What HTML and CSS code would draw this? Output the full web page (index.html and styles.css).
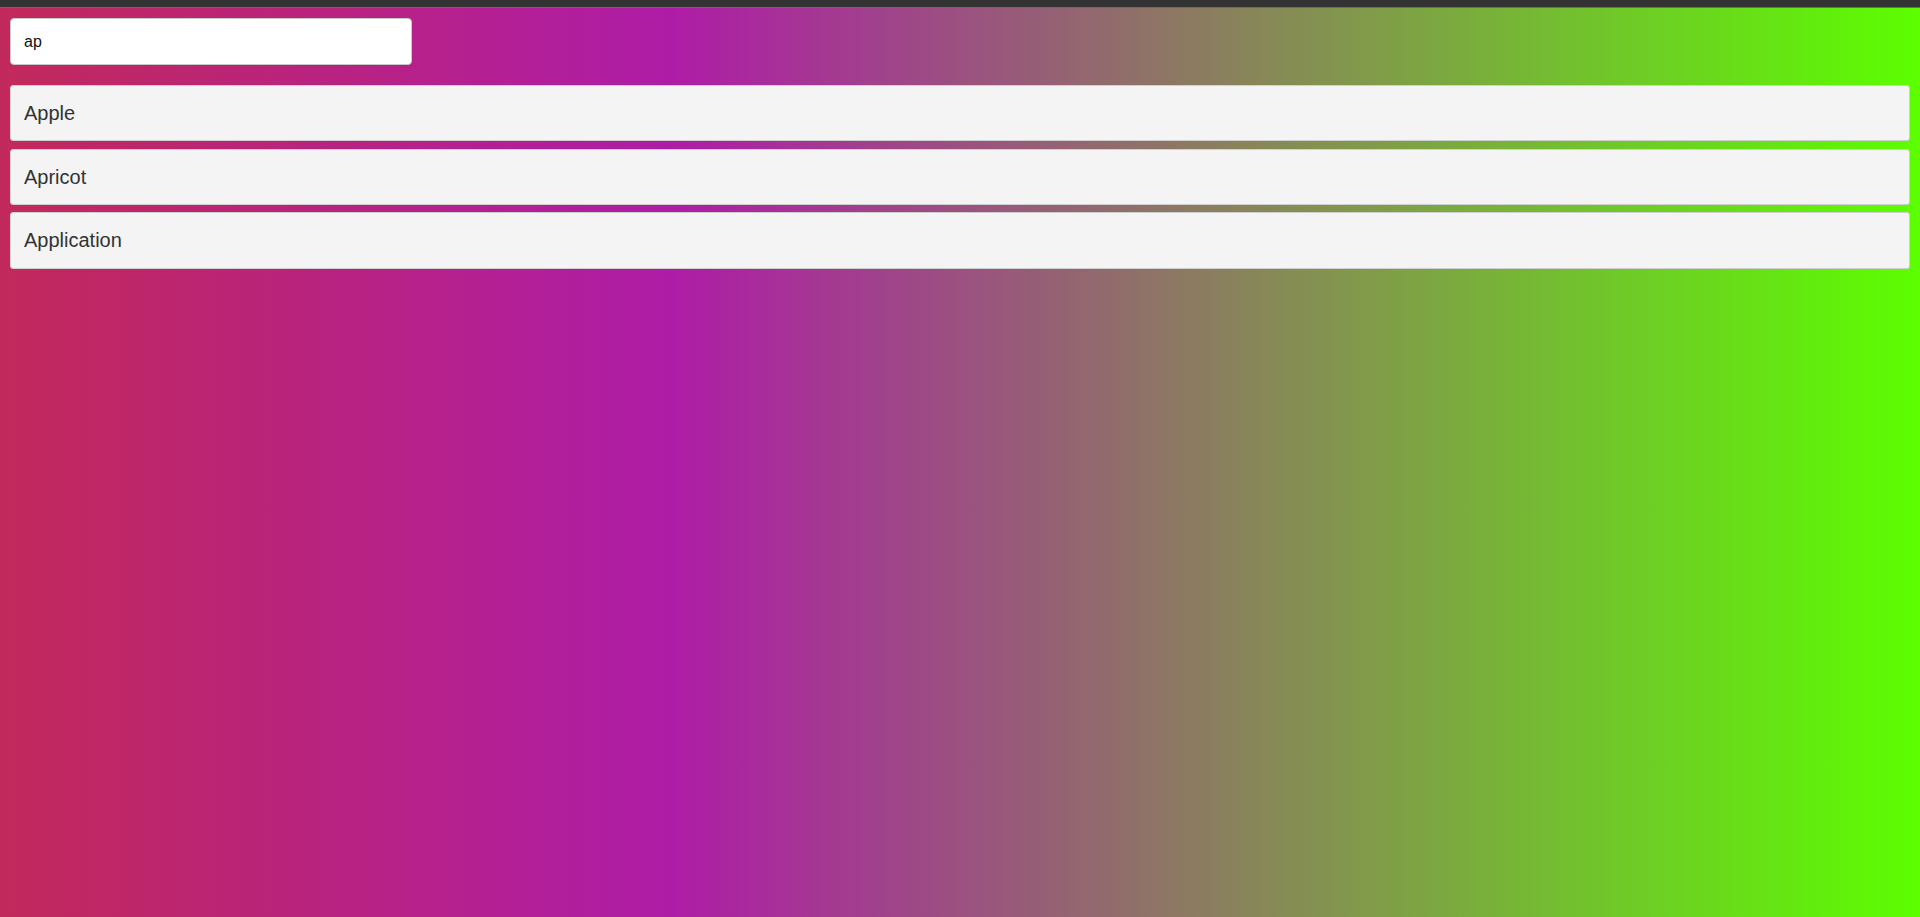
FILE: index.html
```html
<!DOCTYPE html>
<html lang="en">
<head>
<meta charset="utf-8">
<title>Filter</title>
<link rel="stylesheet" href="styles.css">
</head>
<body>
<div class="topbar"></div>
<main class="page">
  <input class="search" type="text" value="ap">
  <ul class="results">
    <li class="item">Apple</li>
    <li class="item">Apricot</li>
    <li class="item">Application</li>
  </ul>
</main>
</body>
</html>
```

FILE: styles.css
```css
html, body {
  margin: 0;
  padding: 0;
  height: 100%;
}
body {
  background: linear-gradient(90deg, #c2295b 0%, #ae1ca7 35%, #5cff00 100%);
  font-family: "Liberation Sans", Arial, sans-serif;
  display: flex;
  flex-direction: column;
}
.topbar {
  height: 7px;
  background: #333333;
  border-bottom: 1px solid #6a6a6a;
  flex: none;
}
.page {
  padding: 10px 10px 0 10px;
  display: flex;
  flex-direction: column;
}
.search {
  box-sizing: border-box;
  width: 402px;
  height: 47px;
  border: 1px solid #c8c8c8;
  border-radius: 4px;
  background: #ffffff;
  padding: 0 13px;
  font-family: "Liberation Sans", Arial, sans-serif;
  font-size: 16px;
  color: #111111;
  outline: none;
}
.results {
  list-style: none;
  margin: 20px 0 0 0;
  padding: 0;
  display: flex;
  flex-direction: column;
  gap: 7.2px;
}
.item {
  box-sizing: border-box;
  height: 56.4px;
  display: flex;
  align-items: center;
  padding: 1px 13px 0 13px;
  background: #f4f4f4;
  border: 1px solid #cfcfcf;
  border-radius: 3px;
  font-size: 20px;
  color: #333333;
}
```
